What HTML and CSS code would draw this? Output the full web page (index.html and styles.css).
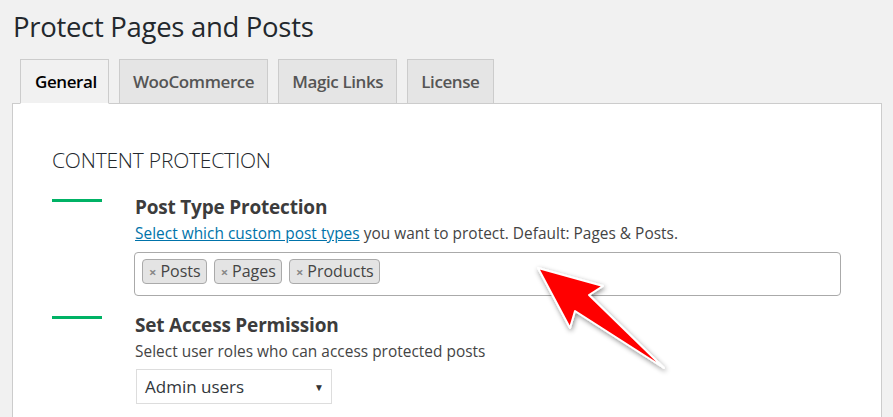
FILE: index.html
```html
<!DOCTYPE html>
<html>
<head>
<meta charset="utf-8">
<link rel="stylesheet" href="styles.css">
</head>
<body>
<div class="wrap">
  <h1 class="title">Protect Pages and Posts</h1>
  <nav class="tabs">
    <a class="tab active">General</a>
    <a class="tab">WooCommerce</a>
    <a class="tab">Magic Links</a>
    <a class="tab">License</a>
  </nav>
  <div class="panel">
    <h2 class="section">CONTENT PROTECTION</h2>
    <div class="row">
      <div class="marker"></div>
      <div class="field">
        <h3 class="label">Post Type Protection</h3>
        <p class="desc"><a class="link">Select which custom post types</a> you want to protect. Default: Pages &amp; Posts.</p>
        <div class="tagbox">
          <span class="tag"><span class="x">×</span>Posts</span>
          <span class="tag"><span class="x">×</span>Pages</span>
          <span class="tag"><span class="x">×</span>Products</span>
        </div>
      </div>
    </div>
    <div class="row row2">
      <div class="marker"></div>
      <div class="field">
        <h3 class="label">Set Access Permission</h3>
        <p class="desc">Select user roles who can access protected posts</p>
        <div class="select"><span>Admin users</span><span class="caret">▼</span></div>
      </div>
    </div>
  </div>
</div>
<svg class="arrow" width="893" height="417" viewBox="0 0 893 417">
  <defs>
    <filter id="sh" x="-20%" y="-20%" width="140%" height="140%">
      <feDropShadow dx="1" dy="2" stdDeviation="2.5" flood-color="#000" flood-opacity="0.45"/>
    </filter>
  </defs>
  <polygon points="538,268 603,286 589,295 664,368 575,311 570,328" fill="#ff0000" stroke="#ffffff" stroke-width="2" stroke-linejoin="round" filter="url(#sh)"/>
</svg>
</body>
</html>
```
FILE: styles.css
```css
html, body {
  margin: 0;
  padding: 0;
}
body {
  background: #f1f1f1;
  font-family: "Open Sans", "Noto Sans", sans-serif;
  color: #444;
  width: 893px;
  height: 417px;
  overflow: hidden;
  position: relative;
}
.wrap {
  padding: 0 11px 0 12px;
}
.title {
  margin: 0;
  padding: 8px 0 0 1px;
  font-size: 27.5px;
  font-weight: 400;
  line-height: 38px;
  color: #23282d;
  letter-spacing: -0.3px;
}
.tabs {
  display: flex;
  gap: 10px;
  margin-top: 13px;
  padding-left: 8px;
  height: 44px;
}
.tab {
  box-sizing: border-box;
  height: 44px;
  padding: 0 13px;
  border: 1px solid #ccc;
  border-bottom: none;
  background: #e5e5e5;
  color: #555;
  font-size: 17px;
  font-weight: 600;
  line-height: 44px;
  letter-spacing: -0.4px;
}
.tab.active {
  background: #f1f1f1;
  color: #000;
  height: 45px;
  margin-bottom: -1px;
  position: relative;
  z-index: 1;
  border-bottom: 1px solid #fff;
  padding: 0 11px 0 14px;
}
.panel {
  background: #fff;
  border: 1px solid #ccc;
  border-bottom: none;
  height: 320px;
  box-sizing: border-box;
  padding: 43px 40px 0 39px;
}
.section {
  margin: 0;
  font-size: 21px;
  font-weight: 300;
  line-height: 26px;
  color: #23282d;
  letter-spacing: -0.2px;
}
.row {
  display: grid;
  grid-template-columns: 83px 1fr;
  margin-top: 22px;
}
.row2 {
  margin-top: 17px;
}
.marker {
  width: 50px;
  height: 3px;
  background: #00b265;
  margin-top: 4px;
}
.row2 .marker {
  margin-top: 3px;
}
.label {
  margin: 0;
  font-size: 19px;
  font-weight: 700;
  line-height: 24px;
  color: #3c3c3c;
  letter-spacing: -0.2px;
}
.desc {
  margin: 5px 0 0;
  font-size: 15.4px;
  line-height: 20px;
  color: #444;
  letter-spacing: 0.03px;
}
.link {
  color: #0073aa;
  text-decoration: underline;
}
.tagbox {
  margin-top: 8px;
  margin-left: -1px;
  box-sizing: border-box;
  height: 44px;
  border: 1px solid #aaa;
  border-radius: 4px;
  padding: 6px 7px;
  display: flex;
  gap: 7px;
  align-items: flex-start;
}
.tag {
  box-sizing: border-box;
  height: 25px;
  padding: 0 5px 0 6px;
  background: #e4e4e4;
  border: 1px solid #aaa;
  border-radius: 4px;
  font-size: 16px;
  line-height: 23px;
  color: #444;
}
.x {
  color: #888;
  font-weight: 700;
  font-size: 13px;
  margin-right: 4px;
}
.select {
  margin-top: 7px;
  margin-left: 1px;
  box-sizing: border-box;
  width: 196px;
  height: 35px;
  border: 1px solid #ddd;
  display: flex;
  align-items: center;
  justify-content: space-between;
  padding: 0 7px 0 8px;
  font-size: 17px;
  color: #32373c;
}
.caret {
  font-size: 10px;
  color: #333;
}
.arrow {
  position: absolute;
  left: 0;
  top: 0;
  pointer-events: none;
}
```
